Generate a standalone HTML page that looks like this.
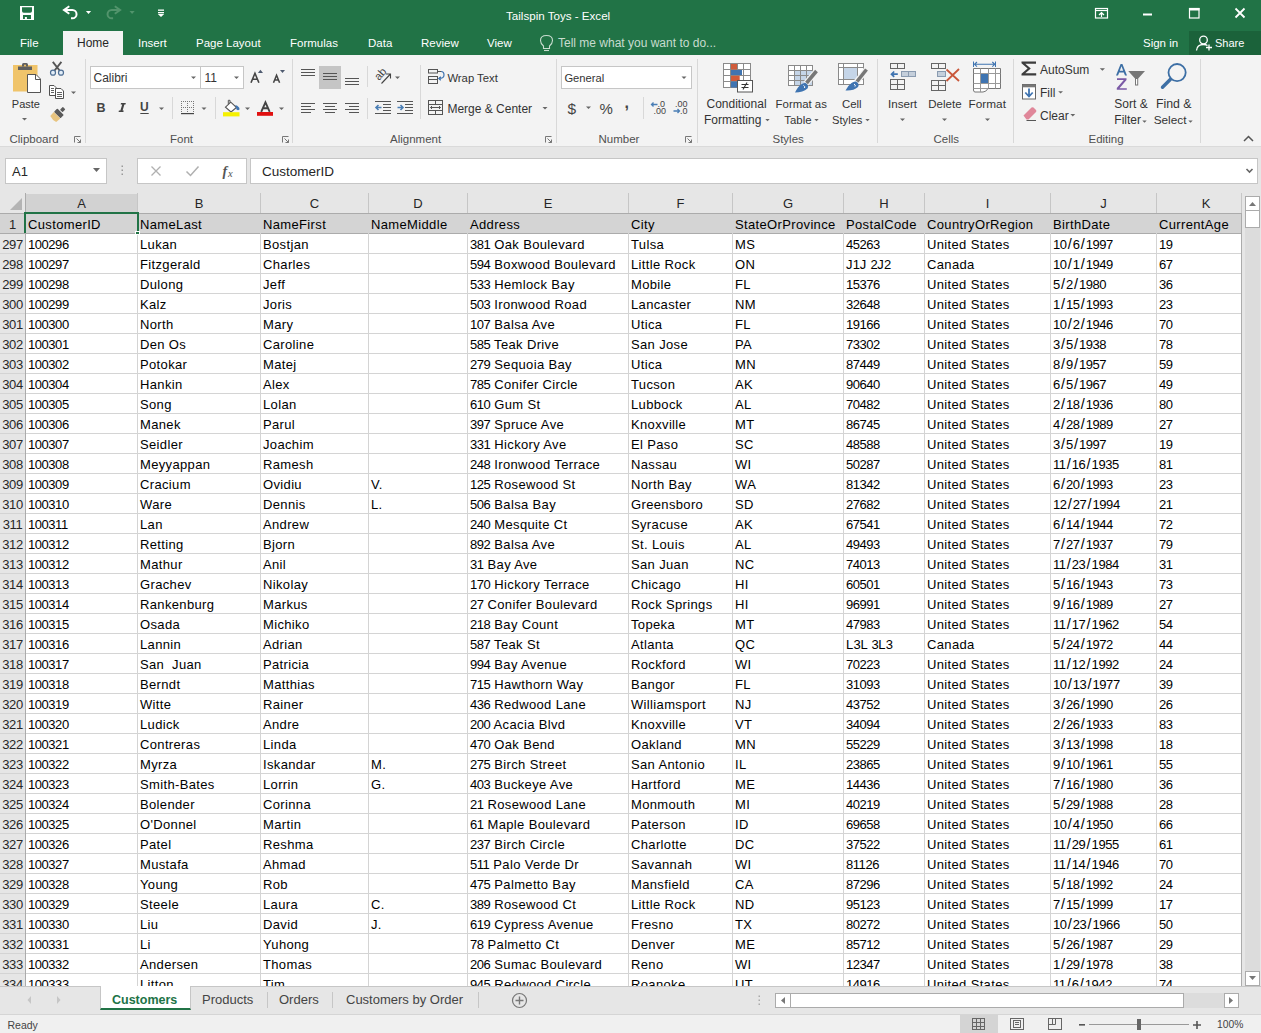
<!DOCTYPE html><html><head><meta charset="utf-8"><title>Tailspin Toys - Excel</title><style>
*{box-sizing:border-box;margin:0;padding:0}
html,body{width:1261px;height:1033px;overflow:hidden;background:#e6e6e6;font-family:"Liberation Sans",sans-serif;color:#000}
.a{position:absolute}
#title{left:0;top:0;width:1261px;height:55px;background:#217346;color:#fff}
#ribbon{left:0;top:55px;width:1261px;height:92px;background:#f3f3f3;border-bottom:1px solid #dadada}
.tab{position:absolute;top:31px;height:24px;font-size:11.5px;line-height:24px;color:#fff;white-space:nowrap}
.lbl{position:absolute;font-size:12px;color:#444;white-space:nowrap;line-height:14px}
.rt{position:absolute;font-size:12px;color:#262626;white-space:nowrap;line-height:14px}
.sep{position:absolute;width:1px;background:#d5d5d5}
.gsep{position:absolute;top:4px;width:1px;height:84px;background:#d5d5d5}
.box{position:absolute;background:#fff;border:1px solid #c6c6c6}
.dd{position:absolute;width:0;height:0;border-left:3px solid transparent;border-right:3px solid transparent;border-top:3px solid #666}
#grid{left:0;top:193px;width:1242px;height:793px;overflow:hidden;background:#fff}
.hl{position:absolute;left:0;height:1px;background:#d4d4d4}
.vl{position:absolute;top:0;width:1px;background:#d4d4d4}
.c{position:absolute;height:20px;font-size:13px;line-height:23px;white-space:nowrap;overflow:visible;padding-left:3px;letter-spacing:0.35px}
.d{letter-spacing:-0.45px}
.s{letter-spacing:0;padding:0 1.1px;font-size:14.5px}
.rh{position:absolute;left:0;width:25px;height:20px;font-size:13px;line-height:23px;text-align:center;color:#262626;letter-spacing:-0.4px}
.ch{position:absolute;top:0;height:20px;font-size:13px;line-height:21px;text-align:center;color:#262626}
</style></head><body>
<div id="title" class="a">
<div class="a" style="left:0;top:0;width:1261px;text-align:center;font-size:11.6px;line-height:31px;padding-left:0"><span class="a" style="left:506px;top:0;">Tailspin Toys - Excel</span></div>
<div class="tab" style="left:20px">File</div>
<div class="tab" style="left:138px">Insert</div>
<div class="tab" style="left:196px">Page Layout</div>
<div class="tab" style="left:290px">Formulas</div>
<div class="tab" style="left:368px">Data</div>
<div class="tab" style="left:421px">Review</div>
<div class="tab" style="left:487px">View</div>
<div class="a" style="left:63px;top:31px;width:60px;height:24px;background:#f3f3f3;color:#262626;font-size:12px;line-height:24px;text-align:center">Home</div>
<div class="tab" style="left:558px;color:#c8dccf;font-size:12px">Tell me what you want to do...</div>
<div class="tab" style="left:1143px">Sign in</div>
<div class="a" style="left:1189px;top:31px;width:72px;height:24px;background:#1b623a"></div>
<div class="tab" style="left:1215px;font-size:11px">Share</div>
</div>
<div id="ribbon" class="a"></div>
<div class="a" style="left:9.5px;top:131.5px;font-size:11.5px;line-height:14px;color:#505050;white-space:nowrap;">Clipboard</div>
<div class="a" style="left:170px;top:131.5px;font-size:11.5px;line-height:14px;color:#505050;white-space:nowrap;">Font</div>
<div class="a" style="left:390px;top:131.5px;font-size:11.5px;line-height:14px;color:#505050;white-space:nowrap;">Alignment</div>
<div class="a" style="left:598.5px;top:131.5px;font-size:11.5px;line-height:14px;color:#505050;white-space:nowrap;">Number</div>
<div class="a" style="left:772.5px;top:131.5px;font-size:11.5px;line-height:14px;color:#505050;white-space:nowrap;">Styles</div>
<div class="a" style="left:933.5px;top:131.5px;font-size:11.5px;line-height:14px;color:#505050;white-space:nowrap;">Cells</div>
<div class="a" style="left:1088.5px;top:131.5px;font-size:11.5px;line-height:14px;color:#505050;white-space:nowrap;">Editing</div>
<div class="a" style="left:11.8px;top:96.8px;font-size:11px;line-height:14px;color:#333;white-space:nowrap;">Paste</div>
<div class="box" style="left:90px;top:66px;width:111px;height:23px;border-color:#c6c6c6"></div>
<div class="box" style="left:200px;top:66px;width:44px;height:23px;border-color:#c6c6c6"></div>
<div class="a" style="left:93.5px;top:70.5px;font-size:12px;line-height:14px;color:#333;white-space:nowrap;">Calibri</div>
<div class="a" style="left:204.5px;top:70.5px;font-size:12px;line-height:14px;color:#333;white-space:nowrap;">11</div>
<div class="a" style="left:319px;top:66px;width:22px;height:23px;background:#c5c5c5"></div>
<div class="a" style="left:447.4px;top:71.4px;font-size:11.3px;line-height:14px;color:#333;white-space:nowrap;">Wrap Text</div>
<div class="a" style="left:447.4px;top:102.2px;font-size:12px;line-height:14px;color:#333;white-space:nowrap;">Merge &amp; Center</div>
<div class="box" style="left:561px;top:66px;width:131px;height:23px;border-color:#c6c6c6"></div>
<div class="a" style="left:564.4px;top:70.5px;font-size:11.2px;line-height:14px;color:#333;white-space:nowrap;">General</div>
<div class="a" style="left:567.5px;top:99.5px;font-size:15.5px;line-height:14px;color:#444;white-space:nowrap;line-height:18px">$</div>
<div class="a" style="left:599.5px;top:100px;font-size:15px;line-height:14px;color:#444;white-space:nowrap;line-height:18px">%</div>
<div class="a" style="left:624.5px;top:93.5px;font-size:16px;line-height:14px;color:#444;white-space:nowrap;line-height:18px;font-weight:bold">,</div>
<div class="a" style="left:706.5px;top:97.1px;font-size:12px;line-height:14px;color:#333;white-space:nowrap;">Conditional</div>
<div class="a" style="left:704px;top:113.4px;font-size:12px;line-height:14px;color:#333;white-space:nowrap;">Formatting</div>
<div class="a" style="left:775.6px;top:97.1px;font-size:11.4px;line-height:14px;color:#333;white-space:nowrap;">Format as</div>
<div class="a" style="left:784.3px;top:113.4px;font-size:11.4px;line-height:14px;color:#333;white-space:nowrap;">Table</div>
<div class="a" style="left:842px;top:97.1px;font-size:11.4px;line-height:14px;color:#333;white-space:nowrap;">Cell</div>
<div class="a" style="left:832px;top:113.4px;font-size:11.2px;line-height:14px;color:#333;white-space:nowrap;">Styles</div>
<div class="a" style="left:888px;top:97.3px;font-size:11.6px;line-height:14px;color:#333;white-space:nowrap;">Insert</div>
<div class="a" style="left:928.3px;top:97.3px;font-size:11.5px;line-height:14px;color:#333;white-space:nowrap;">Delete</div>
<div class="a" style="left:968.6px;top:97.3px;font-size:11.8px;line-height:14px;color:#333;white-space:nowrap;">Format</div>
<div class="a" style="left:1040px;top:63.2px;font-size:12px;line-height:14px;color:#333;white-space:nowrap;">AutoSum</div>
<div class="a" style="left:1040px;top:85.9px;font-size:12px;line-height:14px;color:#333;white-space:nowrap;">Fill</div>
<div class="a" style="left:1040px;top:108.5px;font-size:12px;line-height:14px;color:#333;white-space:nowrap;">Clear</div>
<div class="a" style="left:1114.3px;top:97px;font-size:12px;line-height:14px;color:#333;white-space:nowrap;">Sort &amp;</div>
<div class="a" style="left:1114.3px;top:112.8px;font-size:12px;line-height:14px;color:#333;white-space:nowrap;">Filter</div>
<div class="a" style="left:1156px;top:97px;font-size:12.3px;line-height:14px;color:#333;white-space:nowrap;">Find &amp;</div>
<div class="a" style="left:1153.7px;top:112.8px;font-size:11.8px;line-height:14px;color:#333;white-space:nowrap;">Select</div>
<div class="box" style="left:5px;top:158px;width:102px;height:26px"></div>
<div class="a" style="left:12px;top:158px;font-size:13px;line-height:28px;color:#262626">A1</div>
<div class="box" style="left:137px;top:158px;width:110px;height:26px"></div>
<div class="box" style="left:250px;top:158px;width:1008px;height:26px"></div>
<div class="a" style="left:262px;top:158px;font-size:13.5px;line-height:28px;color:#262626">CustomerID</div>
<div id="grid" class="a">
<div class="a" style="left:0;top:0;width:1241px;height:20px;background:#e6e6e6"></div>
<div class="a" style="left:25px;top:1px;width:112px;height:19px;background:#d2d2d2"></div>
<div class="a" style="left:0;top:20px;width:25px;height:773px;background:#e6e6e6"></div>
<div class="a" style="left:0;top:21px;width:25px;height:19px;background:#d4d4d4"></div>
<div class="a" style="left:26px;top:21px;width:1215px;height:19px;background:#d4d4d4"></div>
<div class="hl" style="top:20px;width:1241px;background:#ababab"></div>
<div class="hl" style="top:40px;width:1241px;background:#ababab"></div>
<div class="hl" style="top:60px;width:1241px;background:#d4d4d4"></div>
<div class="hl" style="top:80px;width:1241px;background:#d4d4d4"></div>
<div class="hl" style="top:100px;width:1241px;background:#d4d4d4"></div>
<div class="hl" style="top:120px;width:1241px;background:#d4d4d4"></div>
<div class="hl" style="top:140px;width:1241px;background:#d4d4d4"></div>
<div class="hl" style="top:160px;width:1241px;background:#d4d4d4"></div>
<div class="hl" style="top:180px;width:1241px;background:#d4d4d4"></div>
<div class="hl" style="top:200px;width:1241px;background:#d4d4d4"></div>
<div class="hl" style="top:220px;width:1241px;background:#d4d4d4"></div>
<div class="hl" style="top:240px;width:1241px;background:#d4d4d4"></div>
<div class="hl" style="top:260px;width:1241px;background:#d4d4d4"></div>
<div class="hl" style="top:280px;width:1241px;background:#d4d4d4"></div>
<div class="hl" style="top:300px;width:1241px;background:#d4d4d4"></div>
<div class="hl" style="top:320px;width:1241px;background:#d4d4d4"></div>
<div class="hl" style="top:340px;width:1241px;background:#d4d4d4"></div>
<div class="hl" style="top:360px;width:1241px;background:#d4d4d4"></div>
<div class="hl" style="top:380px;width:1241px;background:#d4d4d4"></div>
<div class="hl" style="top:400px;width:1241px;background:#d4d4d4"></div>
<div class="hl" style="top:420px;width:1241px;background:#d4d4d4"></div>
<div class="hl" style="top:440px;width:1241px;background:#d4d4d4"></div>
<div class="hl" style="top:460px;width:1241px;background:#d4d4d4"></div>
<div class="hl" style="top:480px;width:1241px;background:#d4d4d4"></div>
<div class="hl" style="top:500px;width:1241px;background:#d4d4d4"></div>
<div class="hl" style="top:520px;width:1241px;background:#d4d4d4"></div>
<div class="hl" style="top:540px;width:1241px;background:#d4d4d4"></div>
<div class="hl" style="top:560px;width:1241px;background:#d4d4d4"></div>
<div class="hl" style="top:580px;width:1241px;background:#d4d4d4"></div>
<div class="hl" style="top:600px;width:1241px;background:#d4d4d4"></div>
<div class="hl" style="top:620px;width:1241px;background:#d4d4d4"></div>
<div class="hl" style="top:640px;width:1241px;background:#d4d4d4"></div>
<div class="hl" style="top:660px;width:1241px;background:#d4d4d4"></div>
<div class="hl" style="top:680px;width:1241px;background:#d4d4d4"></div>
<div class="hl" style="top:700px;width:1241px;background:#d4d4d4"></div>
<div class="hl" style="top:720px;width:1241px;background:#d4d4d4"></div>
<div class="hl" style="top:740px;width:1241px;background:#d4d4d4"></div>
<div class="hl" style="top:760px;width:1241px;background:#d4d4d4"></div>
<div class="hl" style="top:780px;width:1241px;background:#d4d4d4"></div>
<div class="hl" style="top:800px;width:1241px;background:#d4d4d4"></div>
<div class="vl" style="left:25px;height:793px;background:#ababab"></div>
<div class="vl" style="left:137px;top:0;height:20px;background:#c6c6c6"></div>
<div class="vl" style="left:137px;top:40px;height:753px"></div>
<div class="vl" style="left:260px;top:0;height:20px;background:#c6c6c6"></div>
<div class="vl" style="left:260px;top:40px;height:753px"></div>
<div class="vl" style="left:368px;top:0;height:20px;background:#c6c6c6"></div>
<div class="vl" style="left:368px;top:40px;height:753px"></div>
<div class="vl" style="left:467px;top:0;height:20px;background:#c6c6c6"></div>
<div class="vl" style="left:467px;top:40px;height:753px"></div>
<div class="vl" style="left:628px;top:0;height:20px;background:#c6c6c6"></div>
<div class="vl" style="left:628px;top:40px;height:753px"></div>
<div class="vl" style="left:732px;top:0;height:20px;background:#c6c6c6"></div>
<div class="vl" style="left:732px;top:40px;height:753px"></div>
<div class="vl" style="left:843px;top:0;height:20px;background:#c6c6c6"></div>
<div class="vl" style="left:843px;top:40px;height:753px"></div>
<div class="vl" style="left:924px;top:0;height:20px;background:#c6c6c6"></div>
<div class="vl" style="left:924px;top:40px;height:753px"></div>
<div class="vl" style="left:1050px;top:0;height:20px;background:#c6c6c6"></div>
<div class="vl" style="left:1050px;top:40px;height:753px"></div>
<div class="vl" style="left:1156px;top:0;height:20px;background:#c6c6c6"></div>
<div class="vl" style="left:1156px;top:40px;height:753px"></div>
<div class="vl" style="left:1241px;top:0;height:20px;background:#c6c6c6"></div>
<div class="vl" style="left:1241px;top:40px;height:753px"></div>
<div class="ch" style="left:26px;width:111px">A</div>
<div class="ch" style="left:138px;width:122px">B</div>
<div class="ch" style="left:261px;width:107px">C</div>
<div class="ch" style="left:369px;width:98px">D</div>
<div class="ch" style="left:468px;width:160px">E</div>
<div class="ch" style="left:629px;width:103px">F</div>
<div class="ch" style="left:733px;width:110px">G</div>
<div class="ch" style="left:844px;width:80px">H</div>
<div class="ch" style="left:925px;width:125px">I</div>
<div class="ch" style="left:1051px;width:105px">J</div>
<div class="ch" style="left:1157px;width:98px">K</div>
<div class="rh" style="top:20px">1</div>
<div class="c" style="left:25px;top:20px">CustomerID</div>
<div class="c" style="left:137px;top:20px">NameLast</div>
<div class="c" style="left:260px;top:20px">NameFirst</div>
<div class="c" style="left:368px;top:20px">NameMiddle</div>
<div class="c" style="left:467px;top:20px">Address</div>
<div class="c" style="left:628px;top:20px">City</div>
<div class="c" style="left:732px;top:20px">StateOrProvince</div>
<div class="c" style="left:843px;top:20px">PostalCode</div>
<div class="c" style="left:924px;top:20px">CountryOrRegion</div>
<div class="c" style="left:1050px;top:20px">BirthDate</div>
<div class="c" style="left:1156px;top:20px">CurrentAge</div>
<div class="rh" style="top:40px">297</div>
<div class="c" style="left:25px;top:40px"><span class="d">100296</span></div>
<div class="c" style="left:137px;top:40px">Lukan</div>
<div class="c" style="left:260px;top:40px">Bostjan</div>
<div class="c" style="left:467px;top:40px"><span class="d">381</span> Oak Boulevard</div>
<div class="c" style="left:628px;top:40px">Tulsa</div>
<div class="c" style="left:732px;top:40px">MS</div>
<div class="c" style="left:843px;top:40px"><span class="d">45263</span></div>
<div class="c" style="left:924px;top:40px">United States</div>
<div class="c" style="left:1050px;top:40px"><span class="d">10</span><span class="s">/</span><span class="d">6</span><span class="s">/</span><span class="d">1997</span></div>
<div class="c" style="left:1156px;top:40px"><span class="d">19</span></div>
<div class="rh" style="top:60px">298</div>
<div class="c" style="left:25px;top:60px"><span class="d">100297</span></div>
<div class="c" style="left:137px;top:60px">Fitzgerald</div>
<div class="c" style="left:260px;top:60px">Charles</div>
<div class="c" style="left:467px;top:60px"><span class="d">594</span> Boxwood Boulevard</div>
<div class="c" style="left:628px;top:60px">Little Rock</div>
<div class="c" style="left:732px;top:60px">ON</div>
<div class="c" style="left:843px;top:60px">J<span class="d">1</span>J <span class="d">2</span>J<span class="d">2</span></div>
<div class="c" style="left:924px;top:60px">Canada</div>
<div class="c" style="left:1050px;top:60px"><span class="d">10</span><span class="s">/</span><span class="d">1</span><span class="s">/</span><span class="d">1949</span></div>
<div class="c" style="left:1156px;top:60px"><span class="d">67</span></div>
<div class="rh" style="top:80px">299</div>
<div class="c" style="left:25px;top:80px"><span class="d">100298</span></div>
<div class="c" style="left:137px;top:80px">Dulong</div>
<div class="c" style="left:260px;top:80px">Jeff</div>
<div class="c" style="left:467px;top:80px"><span class="d">533</span> Hemlock Bay</div>
<div class="c" style="left:628px;top:80px">Mobile</div>
<div class="c" style="left:732px;top:80px">FL</div>
<div class="c" style="left:843px;top:80px"><span class="d">15376</span></div>
<div class="c" style="left:924px;top:80px">United States</div>
<div class="c" style="left:1050px;top:80px"><span class="d">5</span><span class="s">/</span><span class="d">2</span><span class="s">/</span><span class="d">1980</span></div>
<div class="c" style="left:1156px;top:80px"><span class="d">36</span></div>
<div class="rh" style="top:100px">300</div>
<div class="c" style="left:25px;top:100px"><span class="d">100299</span></div>
<div class="c" style="left:137px;top:100px">Kalz</div>
<div class="c" style="left:260px;top:100px">Joris</div>
<div class="c" style="left:467px;top:100px"><span class="d">503</span> Ironwood Road</div>
<div class="c" style="left:628px;top:100px">Lancaster</div>
<div class="c" style="left:732px;top:100px">NM</div>
<div class="c" style="left:843px;top:100px"><span class="d">32648</span></div>
<div class="c" style="left:924px;top:100px">United States</div>
<div class="c" style="left:1050px;top:100px"><span class="d">1</span><span class="s">/</span><span class="d">15</span><span class="s">/</span><span class="d">1993</span></div>
<div class="c" style="left:1156px;top:100px"><span class="d">23</span></div>
<div class="rh" style="top:120px">301</div>
<div class="c" style="left:25px;top:120px"><span class="d">100300</span></div>
<div class="c" style="left:137px;top:120px">North</div>
<div class="c" style="left:260px;top:120px">Mary</div>
<div class="c" style="left:467px;top:120px"><span class="d">107</span> Balsa Ave</div>
<div class="c" style="left:628px;top:120px">Utica</div>
<div class="c" style="left:732px;top:120px">FL</div>
<div class="c" style="left:843px;top:120px"><span class="d">19166</span></div>
<div class="c" style="left:924px;top:120px">United States</div>
<div class="c" style="left:1050px;top:120px"><span class="d">10</span><span class="s">/</span><span class="d">2</span><span class="s">/</span><span class="d">1946</span></div>
<div class="c" style="left:1156px;top:120px"><span class="d">70</span></div>
<div class="rh" style="top:140px">302</div>
<div class="c" style="left:25px;top:140px"><span class="d">100301</span></div>
<div class="c" style="left:137px;top:140px">Den Os</div>
<div class="c" style="left:260px;top:140px">Caroline</div>
<div class="c" style="left:467px;top:140px"><span class="d">585</span> Teak Drive</div>
<div class="c" style="left:628px;top:140px">San Jose</div>
<div class="c" style="left:732px;top:140px">PA</div>
<div class="c" style="left:843px;top:140px"><span class="d">73302</span></div>
<div class="c" style="left:924px;top:140px">United States</div>
<div class="c" style="left:1050px;top:140px"><span class="d">3</span><span class="s">/</span><span class="d">5</span><span class="s">/</span><span class="d">1938</span></div>
<div class="c" style="left:1156px;top:140px"><span class="d">78</span></div>
<div class="rh" style="top:160px">303</div>
<div class="c" style="left:25px;top:160px"><span class="d">100302</span></div>
<div class="c" style="left:137px;top:160px">Potokar</div>
<div class="c" style="left:260px;top:160px">Matej</div>
<div class="c" style="left:467px;top:160px"><span class="d">279</span> Sequoia Bay</div>
<div class="c" style="left:628px;top:160px">Utica</div>
<div class="c" style="left:732px;top:160px">MN</div>
<div class="c" style="left:843px;top:160px"><span class="d">87449</span></div>
<div class="c" style="left:924px;top:160px">United States</div>
<div class="c" style="left:1050px;top:160px"><span class="d">8</span><span class="s">/</span><span class="d">9</span><span class="s">/</span><span class="d">1957</span></div>
<div class="c" style="left:1156px;top:160px"><span class="d">59</span></div>
<div class="rh" style="top:180px">304</div>
<div class="c" style="left:25px;top:180px"><span class="d">100304</span></div>
<div class="c" style="left:137px;top:180px">Hankin</div>
<div class="c" style="left:260px;top:180px">Alex</div>
<div class="c" style="left:467px;top:180px"><span class="d">785</span> Conifer Circle</div>
<div class="c" style="left:628px;top:180px">Tucson</div>
<div class="c" style="left:732px;top:180px">AK</div>
<div class="c" style="left:843px;top:180px"><span class="d">90640</span></div>
<div class="c" style="left:924px;top:180px">United States</div>
<div class="c" style="left:1050px;top:180px"><span class="d">6</span><span class="s">/</span><span class="d">5</span><span class="s">/</span><span class="d">1967</span></div>
<div class="c" style="left:1156px;top:180px"><span class="d">49</span></div>
<div class="rh" style="top:200px">305</div>
<div class="c" style="left:25px;top:200px"><span class="d">100305</span></div>
<div class="c" style="left:137px;top:200px">Song</div>
<div class="c" style="left:260px;top:200px">Lolan</div>
<div class="c" style="left:467px;top:200px"><span class="d">610</span> Gum St</div>
<div class="c" style="left:628px;top:200px">Lubbock</div>
<div class="c" style="left:732px;top:200px">AL</div>
<div class="c" style="left:843px;top:200px"><span class="d">70482</span></div>
<div class="c" style="left:924px;top:200px">United States</div>
<div class="c" style="left:1050px;top:200px"><span class="d">2</span><span class="s">/</span><span class="d">18</span><span class="s">/</span><span class="d">1936</span></div>
<div class="c" style="left:1156px;top:200px"><span class="d">80</span></div>
<div class="rh" style="top:220px">306</div>
<div class="c" style="left:25px;top:220px"><span class="d">100306</span></div>
<div class="c" style="left:137px;top:220px">Manek</div>
<div class="c" style="left:260px;top:220px">Parul</div>
<div class="c" style="left:467px;top:220px"><span class="d">397</span> Spruce Ave</div>
<div class="c" style="left:628px;top:220px">Knoxville</div>
<div class="c" style="left:732px;top:220px">MT</div>
<div class="c" style="left:843px;top:220px"><span class="d">86745</span></div>
<div class="c" style="left:924px;top:220px">United States</div>
<div class="c" style="left:1050px;top:220px"><span class="d">4</span><span class="s">/</span><span class="d">28</span><span class="s">/</span><span class="d">1989</span></div>
<div class="c" style="left:1156px;top:220px"><span class="d">27</span></div>
<div class="rh" style="top:240px">307</div>
<div class="c" style="left:25px;top:240px"><span class="d">100307</span></div>
<div class="c" style="left:137px;top:240px">Seidler</div>
<div class="c" style="left:260px;top:240px">Joachim</div>
<div class="c" style="left:467px;top:240px"><span class="d">331</span> Hickory Ave</div>
<div class="c" style="left:628px;top:240px">El Paso</div>
<div class="c" style="left:732px;top:240px">SC</div>
<div class="c" style="left:843px;top:240px"><span class="d">48588</span></div>
<div class="c" style="left:924px;top:240px">United States</div>
<div class="c" style="left:1050px;top:240px"><span class="d">3</span><span class="s">/</span><span class="d">5</span><span class="s">/</span><span class="d">1997</span></div>
<div class="c" style="left:1156px;top:240px"><span class="d">19</span></div>
<div class="rh" style="top:260px">308</div>
<div class="c" style="left:25px;top:260px"><span class="d">100308</span></div>
<div class="c" style="left:137px;top:260px">Meyyappan</div>
<div class="c" style="left:260px;top:260px">Ramesh</div>
<div class="c" style="left:467px;top:260px"><span class="d">248</span> Ironwood Terrace</div>
<div class="c" style="left:628px;top:260px">Nassau</div>
<div class="c" style="left:732px;top:260px">WI</div>
<div class="c" style="left:843px;top:260px"><span class="d">50287</span></div>
<div class="c" style="left:924px;top:260px">United States</div>
<div class="c" style="left:1050px;top:260px"><span class="d">11</span><span class="s">/</span><span class="d">16</span><span class="s">/</span><span class="d">1935</span></div>
<div class="c" style="left:1156px;top:260px"><span class="d">81</span></div>
<div class="rh" style="top:280px">309</div>
<div class="c" style="left:25px;top:280px"><span class="d">100309</span></div>
<div class="c" style="left:137px;top:280px">Cracium</div>
<div class="c" style="left:260px;top:280px">Ovidiu</div>
<div class="c" style="left:368px;top:280px">V.</div>
<div class="c" style="left:467px;top:280px"><span class="d">125</span> Rosewood St</div>
<div class="c" style="left:628px;top:280px">North Bay</div>
<div class="c" style="left:732px;top:280px">WA</div>
<div class="c" style="left:843px;top:280px"><span class="d">81342</span></div>
<div class="c" style="left:924px;top:280px">United States</div>
<div class="c" style="left:1050px;top:280px"><span class="d">6</span><span class="s">/</span><span class="d">20</span><span class="s">/</span><span class="d">1993</span></div>
<div class="c" style="left:1156px;top:280px"><span class="d">23</span></div>
<div class="rh" style="top:300px">310</div>
<div class="c" style="left:25px;top:300px"><span class="d">100310</span></div>
<div class="c" style="left:137px;top:300px">Ware</div>
<div class="c" style="left:260px;top:300px">Dennis</div>
<div class="c" style="left:368px;top:300px">L.</div>
<div class="c" style="left:467px;top:300px"><span class="d">506</span> Balsa Bay</div>
<div class="c" style="left:628px;top:300px">Greensboro</div>
<div class="c" style="left:732px;top:300px">SD</div>
<div class="c" style="left:843px;top:300px"><span class="d">27682</span></div>
<div class="c" style="left:924px;top:300px">United States</div>
<div class="c" style="left:1050px;top:300px"><span class="d">12</span><span class="s">/</span><span class="d">27</span><span class="s">/</span><span class="d">1994</span></div>
<div class="c" style="left:1156px;top:300px"><span class="d">21</span></div>
<div class="rh" style="top:320px">311</div>
<div class="c" style="left:25px;top:320px"><span class="d">100311</span></div>
<div class="c" style="left:137px;top:320px">Lan</div>
<div class="c" style="left:260px;top:320px">Andrew</div>
<div class="c" style="left:467px;top:320px"><span class="d">240</span> Mesquite Ct</div>
<div class="c" style="left:628px;top:320px">Syracuse</div>
<div class="c" style="left:732px;top:320px">AK</div>
<div class="c" style="left:843px;top:320px"><span class="d">67541</span></div>
<div class="c" style="left:924px;top:320px">United States</div>
<div class="c" style="left:1050px;top:320px"><span class="d">6</span><span class="s">/</span><span class="d">14</span><span class="s">/</span><span class="d">1944</span></div>
<div class="c" style="left:1156px;top:320px"><span class="d">72</span></div>
<div class="rh" style="top:340px">312</div>
<div class="c" style="left:25px;top:340px"><span class="d">100312</span></div>
<div class="c" style="left:137px;top:340px">Retting</div>
<div class="c" style="left:260px;top:340px">Bjorn</div>
<div class="c" style="left:467px;top:340px"><span class="d">892</span> Balsa Ave</div>
<div class="c" style="left:628px;top:340px">St. Louis</div>
<div class="c" style="left:732px;top:340px">AL</div>
<div class="c" style="left:843px;top:340px"><span class="d">49493</span></div>
<div class="c" style="left:924px;top:340px">United States</div>
<div class="c" style="left:1050px;top:340px"><span class="d">7</span><span class="s">/</span><span class="d">27</span><span class="s">/</span><span class="d">1937</span></div>
<div class="c" style="left:1156px;top:340px"><span class="d">79</span></div>
<div class="rh" style="top:360px">313</div>
<div class="c" style="left:25px;top:360px"><span class="d">100312</span></div>
<div class="c" style="left:137px;top:360px">Mathur</div>
<div class="c" style="left:260px;top:360px">Anil</div>
<div class="c" style="left:467px;top:360px"><span class="d">31</span> Bay Ave</div>
<div class="c" style="left:628px;top:360px">San Juan</div>
<div class="c" style="left:732px;top:360px">NC</div>
<div class="c" style="left:843px;top:360px"><span class="d">74013</span></div>
<div class="c" style="left:924px;top:360px">United States</div>
<div class="c" style="left:1050px;top:360px"><span class="d">11</span><span class="s">/</span><span class="d">23</span><span class="s">/</span><span class="d">1984</span></div>
<div class="c" style="left:1156px;top:360px"><span class="d">31</span></div>
<div class="rh" style="top:380px">314</div>
<div class="c" style="left:25px;top:380px"><span class="d">100313</span></div>
<div class="c" style="left:137px;top:380px">Grachev</div>
<div class="c" style="left:260px;top:380px">Nikolay</div>
<div class="c" style="left:467px;top:380px"><span class="d">170</span> Hickory Terrace</div>
<div class="c" style="left:628px;top:380px">Chicago</div>
<div class="c" style="left:732px;top:380px">HI</div>
<div class="c" style="left:843px;top:380px"><span class="d">60501</span></div>
<div class="c" style="left:924px;top:380px">United States</div>
<div class="c" style="left:1050px;top:380px"><span class="d">5</span><span class="s">/</span><span class="d">16</span><span class="s">/</span><span class="d">1943</span></div>
<div class="c" style="left:1156px;top:380px"><span class="d">73</span></div>
<div class="rh" style="top:400px">315</div>
<div class="c" style="left:25px;top:400px"><span class="d">100314</span></div>
<div class="c" style="left:137px;top:400px">Rankenburg</div>
<div class="c" style="left:260px;top:400px">Markus</div>
<div class="c" style="left:467px;top:400px"><span class="d">27</span> Conifer Boulevard</div>
<div class="c" style="left:628px;top:400px">Rock Springs</div>
<div class="c" style="left:732px;top:400px">HI</div>
<div class="c" style="left:843px;top:400px"><span class="d">96991</span></div>
<div class="c" style="left:924px;top:400px">United States</div>
<div class="c" style="left:1050px;top:400px"><span class="d">9</span><span class="s">/</span><span class="d">16</span><span class="s">/</span><span class="d">1989</span></div>
<div class="c" style="left:1156px;top:400px"><span class="d">27</span></div>
<div class="rh" style="top:420px">316</div>
<div class="c" style="left:25px;top:420px"><span class="d">100315</span></div>
<div class="c" style="left:137px;top:420px">Osada</div>
<div class="c" style="left:260px;top:420px">Michiko</div>
<div class="c" style="left:467px;top:420px"><span class="d">218</span> Bay Count</div>
<div class="c" style="left:628px;top:420px">Topeka</div>
<div class="c" style="left:732px;top:420px">MT</div>
<div class="c" style="left:843px;top:420px"><span class="d">47983</span></div>
<div class="c" style="left:924px;top:420px">United States</div>
<div class="c" style="left:1050px;top:420px"><span class="d">11</span><span class="s">/</span><span class="d">17</span><span class="s">/</span><span class="d">1962</span></div>
<div class="c" style="left:1156px;top:420px"><span class="d">54</span></div>
<div class="rh" style="top:440px">317</div>
<div class="c" style="left:25px;top:440px"><span class="d">100316</span></div>
<div class="c" style="left:137px;top:440px">Lannin</div>
<div class="c" style="left:260px;top:440px">Adrian</div>
<div class="c" style="left:467px;top:440px"><span class="d">587</span> Teak St</div>
<div class="c" style="left:628px;top:440px">Atlanta</div>
<div class="c" style="left:732px;top:440px">QC</div>
<div class="c" style="left:843px;top:440px">L<span class="d">3</span>L <span class="d">3</span>L<span class="d">3</span></div>
<div class="c" style="left:924px;top:440px">Canada</div>
<div class="c" style="left:1050px;top:440px"><span class="d">5</span><span class="s">/</span><span class="d">24</span><span class="s">/</span><span class="d">1972</span></div>
<div class="c" style="left:1156px;top:440px"><span class="d">44</span></div>
<div class="rh" style="top:460px">318</div>
<div class="c" style="left:25px;top:460px"><span class="d">100317</span></div>
<div class="c" style="left:137px;top:460px">San &nbsp;Juan</div>
<div class="c" style="left:260px;top:460px">Patricia</div>
<div class="c" style="left:467px;top:460px"><span class="d">994</span> Bay Avenue</div>
<div class="c" style="left:628px;top:460px">Rockford</div>
<div class="c" style="left:732px;top:460px">WI</div>
<div class="c" style="left:843px;top:460px"><span class="d">70223</span></div>
<div class="c" style="left:924px;top:460px">United States</div>
<div class="c" style="left:1050px;top:460px"><span class="d">11</span><span class="s">/</span><span class="d">12</span><span class="s">/</span><span class="d">1992</span></div>
<div class="c" style="left:1156px;top:460px"><span class="d">24</span></div>
<div class="rh" style="top:480px">319</div>
<div class="c" style="left:25px;top:480px"><span class="d">100318</span></div>
<div class="c" style="left:137px;top:480px">Berndt</div>
<div class="c" style="left:260px;top:480px">Matthias</div>
<div class="c" style="left:467px;top:480px"><span class="d">715</span> Hawthorn Way</div>
<div class="c" style="left:628px;top:480px">Bangor</div>
<div class="c" style="left:732px;top:480px">FL</div>
<div class="c" style="left:843px;top:480px"><span class="d">31093</span></div>
<div class="c" style="left:924px;top:480px">United States</div>
<div class="c" style="left:1050px;top:480px"><span class="d">10</span><span class="s">/</span><span class="d">13</span><span class="s">/</span><span class="d">1977</span></div>
<div class="c" style="left:1156px;top:480px"><span class="d">39</span></div>
<div class="rh" style="top:500px">320</div>
<div class="c" style="left:25px;top:500px"><span class="d">100319</span></div>
<div class="c" style="left:137px;top:500px">Witte</div>
<div class="c" style="left:260px;top:500px">Rainer</div>
<div class="c" style="left:467px;top:500px"><span class="d">436</span> Redwood Lane</div>
<div class="c" style="left:628px;top:500px">Williamsport</div>
<div class="c" style="left:732px;top:500px">NJ</div>
<div class="c" style="left:843px;top:500px"><span class="d">43752</span></div>
<div class="c" style="left:924px;top:500px">United States</div>
<div class="c" style="left:1050px;top:500px"><span class="d">3</span><span class="s">/</span><span class="d">26</span><span class="s">/</span><span class="d">1990</span></div>
<div class="c" style="left:1156px;top:500px"><span class="d">26</span></div>
<div class="rh" style="top:520px">321</div>
<div class="c" style="left:25px;top:520px"><span class="d">100320</span></div>
<div class="c" style="left:137px;top:520px">Ludick</div>
<div class="c" style="left:260px;top:520px">Andre</div>
<div class="c" style="left:467px;top:520px"><span class="d">200</span> Acacia Blvd</div>
<div class="c" style="left:628px;top:520px">Knoxville</div>
<div class="c" style="left:732px;top:520px">VT</div>
<div class="c" style="left:843px;top:520px"><span class="d">34094</span></div>
<div class="c" style="left:924px;top:520px">United States</div>
<div class="c" style="left:1050px;top:520px"><span class="d">2</span><span class="s">/</span><span class="d">26</span><span class="s">/</span><span class="d">1933</span></div>
<div class="c" style="left:1156px;top:520px"><span class="d">83</span></div>
<div class="rh" style="top:540px">322</div>
<div class="c" style="left:25px;top:540px"><span class="d">100321</span></div>
<div class="c" style="left:137px;top:540px">Contreras</div>
<div class="c" style="left:260px;top:540px">Linda</div>
<div class="c" style="left:467px;top:540px"><span class="d">470</span> Oak Bend</div>
<div class="c" style="left:628px;top:540px">Oakland</div>
<div class="c" style="left:732px;top:540px">MN</div>
<div class="c" style="left:843px;top:540px"><span class="d">55229</span></div>
<div class="c" style="left:924px;top:540px">United States</div>
<div class="c" style="left:1050px;top:540px"><span class="d">3</span><span class="s">/</span><span class="d">13</span><span class="s">/</span><span class="d">1998</span></div>
<div class="c" style="left:1156px;top:540px"><span class="d">18</span></div>
<div class="rh" style="top:560px">323</div>
<div class="c" style="left:25px;top:560px"><span class="d">100322</span></div>
<div class="c" style="left:137px;top:560px">Myrza</div>
<div class="c" style="left:260px;top:560px">Iskandar</div>
<div class="c" style="left:368px;top:560px">M.</div>
<div class="c" style="left:467px;top:560px"><span class="d">275</span> Birch Street</div>
<div class="c" style="left:628px;top:560px">San Antonio</div>
<div class="c" style="left:732px;top:560px">IL</div>
<div class="c" style="left:843px;top:560px"><span class="d">23865</span></div>
<div class="c" style="left:924px;top:560px">United States</div>
<div class="c" style="left:1050px;top:560px"><span class="d">9</span><span class="s">/</span><span class="d">10</span><span class="s">/</span><span class="d">1961</span></div>
<div class="c" style="left:1156px;top:560px"><span class="d">55</span></div>
<div class="rh" style="top:580px">324</div>
<div class="c" style="left:25px;top:580px"><span class="d">100323</span></div>
<div class="c" style="left:137px;top:580px">Smith-Bates</div>
<div class="c" style="left:260px;top:580px">Lorrin</div>
<div class="c" style="left:368px;top:580px">G.</div>
<div class="c" style="left:467px;top:580px"><span class="d">403</span> Buckeye Ave</div>
<div class="c" style="left:628px;top:580px">Hartford</div>
<div class="c" style="left:732px;top:580px">ME</div>
<div class="c" style="left:843px;top:580px"><span class="d">14436</span></div>
<div class="c" style="left:924px;top:580px">United States</div>
<div class="c" style="left:1050px;top:580px"><span class="d">7</span><span class="s">/</span><span class="d">16</span><span class="s">/</span><span class="d">1980</span></div>
<div class="c" style="left:1156px;top:580px"><span class="d">36</span></div>
<div class="rh" style="top:600px">325</div>
<div class="c" style="left:25px;top:600px"><span class="d">100324</span></div>
<div class="c" style="left:137px;top:600px">Bolender</div>
<div class="c" style="left:260px;top:600px">Corinna</div>
<div class="c" style="left:467px;top:600px"><span class="d">21</span> Rosewood Lane</div>
<div class="c" style="left:628px;top:600px">Monmouth</div>
<div class="c" style="left:732px;top:600px">MI</div>
<div class="c" style="left:843px;top:600px"><span class="d">40219</span></div>
<div class="c" style="left:924px;top:600px">United States</div>
<div class="c" style="left:1050px;top:600px"><span class="d">5</span><span class="s">/</span><span class="d">29</span><span class="s">/</span><span class="d">1988</span></div>
<div class="c" style="left:1156px;top:600px"><span class="d">28</span></div>
<div class="rh" style="top:620px">326</div>
<div class="c" style="left:25px;top:620px"><span class="d">100325</span></div>
<div class="c" style="left:137px;top:620px">O'Donnel</div>
<div class="c" style="left:260px;top:620px">Martin</div>
<div class="c" style="left:467px;top:620px"><span class="d">61</span> Maple Boulevard</div>
<div class="c" style="left:628px;top:620px">Paterson</div>
<div class="c" style="left:732px;top:620px">ID</div>
<div class="c" style="left:843px;top:620px"><span class="d">69658</span></div>
<div class="c" style="left:924px;top:620px">United States</div>
<div class="c" style="left:1050px;top:620px"><span class="d">10</span><span class="s">/</span><span class="d">4</span><span class="s">/</span><span class="d">1950</span></div>
<div class="c" style="left:1156px;top:620px"><span class="d">66</span></div>
<div class="rh" style="top:640px">327</div>
<div class="c" style="left:25px;top:640px"><span class="d">100326</span></div>
<div class="c" style="left:137px;top:640px">Patel</div>
<div class="c" style="left:260px;top:640px">Reshma</div>
<div class="c" style="left:467px;top:640px"><span class="d">237</span> Birch Circle</div>
<div class="c" style="left:628px;top:640px">Charlotte</div>
<div class="c" style="left:732px;top:640px">DC</div>
<div class="c" style="left:843px;top:640px"><span class="d">37522</span></div>
<div class="c" style="left:924px;top:640px">United States</div>
<div class="c" style="left:1050px;top:640px"><span class="d">11</span><span class="s">/</span><span class="d">29</span><span class="s">/</span><span class="d">1955</span></div>
<div class="c" style="left:1156px;top:640px"><span class="d">61</span></div>
<div class="rh" style="top:660px">328</div>
<div class="c" style="left:25px;top:660px"><span class="d">100327</span></div>
<div class="c" style="left:137px;top:660px">Mustafa</div>
<div class="c" style="left:260px;top:660px">Ahmad</div>
<div class="c" style="left:467px;top:660px"><span class="d">511</span> Palo Verde Dr</div>
<div class="c" style="left:628px;top:660px">Savannah</div>
<div class="c" style="left:732px;top:660px">WI</div>
<div class="c" style="left:843px;top:660px"><span class="d">81126</span></div>
<div class="c" style="left:924px;top:660px">United States</div>
<div class="c" style="left:1050px;top:660px"><span class="d">11</span><span class="s">/</span><span class="d">14</span><span class="s">/</span><span class="d">1946</span></div>
<div class="c" style="left:1156px;top:660px"><span class="d">70</span></div>
<div class="rh" style="top:680px">329</div>
<div class="c" style="left:25px;top:680px"><span class="d">100328</span></div>
<div class="c" style="left:137px;top:680px">Young</div>
<div class="c" style="left:260px;top:680px">Rob</div>
<div class="c" style="left:467px;top:680px"><span class="d">475</span> Palmetto Bay</div>
<div class="c" style="left:628px;top:680px">Mansfield</div>
<div class="c" style="left:732px;top:680px">CA</div>
<div class="c" style="left:843px;top:680px"><span class="d">87296</span></div>
<div class="c" style="left:924px;top:680px">United States</div>
<div class="c" style="left:1050px;top:680px"><span class="d">5</span><span class="s">/</span><span class="d">18</span><span class="s">/</span><span class="d">1992</span></div>
<div class="c" style="left:1156px;top:680px"><span class="d">24</span></div>
<div class="rh" style="top:700px">330</div>
<div class="c" style="left:25px;top:700px"><span class="d">100329</span></div>
<div class="c" style="left:137px;top:700px">Steele</div>
<div class="c" style="left:260px;top:700px">Laura</div>
<div class="c" style="left:368px;top:700px">C.</div>
<div class="c" style="left:467px;top:700px"><span class="d">389</span> Rosewood Ct</div>
<div class="c" style="left:628px;top:700px">Little Rock</div>
<div class="c" style="left:732px;top:700px">ND</div>
<div class="c" style="left:843px;top:700px"><span class="d">95123</span></div>
<div class="c" style="left:924px;top:700px">United States</div>
<div class="c" style="left:1050px;top:700px"><span class="d">7</span><span class="s">/</span><span class="d">15</span><span class="s">/</span><span class="d">1999</span></div>
<div class="c" style="left:1156px;top:700px"><span class="d">17</span></div>
<div class="rh" style="top:720px">331</div>
<div class="c" style="left:25px;top:720px"><span class="d">100330</span></div>
<div class="c" style="left:137px;top:720px">Liu</div>
<div class="c" style="left:260px;top:720px">David</div>
<div class="c" style="left:368px;top:720px">J.</div>
<div class="c" style="left:467px;top:720px"><span class="d">619</span> Cypress Avenue</div>
<div class="c" style="left:628px;top:720px">Fresno</div>
<div class="c" style="left:732px;top:720px">TX</div>
<div class="c" style="left:843px;top:720px"><span class="d">80272</span></div>
<div class="c" style="left:924px;top:720px">United States</div>
<div class="c" style="left:1050px;top:720px"><span class="d">10</span><span class="s">/</span><span class="d">23</span><span class="s">/</span><span class="d">1966</span></div>
<div class="c" style="left:1156px;top:720px"><span class="d">50</span></div>
<div class="rh" style="top:740px">332</div>
<div class="c" style="left:25px;top:740px"><span class="d">100331</span></div>
<div class="c" style="left:137px;top:740px">Li</div>
<div class="c" style="left:260px;top:740px">Yuhong</div>
<div class="c" style="left:467px;top:740px"><span class="d">78</span> Palmetto Ct</div>
<div class="c" style="left:628px;top:740px">Denver</div>
<div class="c" style="left:732px;top:740px">ME</div>
<div class="c" style="left:843px;top:740px"><span class="d">85712</span></div>
<div class="c" style="left:924px;top:740px">United States</div>
<div class="c" style="left:1050px;top:740px"><span class="d">5</span><span class="s">/</span><span class="d">26</span><span class="s">/</span><span class="d">1987</span></div>
<div class="c" style="left:1156px;top:740px"><span class="d">29</span></div>
<div class="rh" style="top:760px">333</div>
<div class="c" style="left:25px;top:760px"><span class="d">100332</span></div>
<div class="c" style="left:137px;top:760px">Andersen</div>
<div class="c" style="left:260px;top:760px">Thomas</div>
<div class="c" style="left:467px;top:760px"><span class="d">206</span> Sumac Boulevard</div>
<div class="c" style="left:628px;top:760px">Reno</div>
<div class="c" style="left:732px;top:760px">WI</div>
<div class="c" style="left:843px;top:760px"><span class="d">12347</span></div>
<div class="c" style="left:924px;top:760px">United States</div>
<div class="c" style="left:1050px;top:760px"><span class="d">1</span><span class="s">/</span><span class="d">29</span><span class="s">/</span><span class="d">1978</span></div>
<div class="c" style="left:1156px;top:760px"><span class="d">38</span></div>
<div class="rh" style="top:780px">334</div>
<div class="c" style="left:25px;top:780px"><span class="d">100333</span></div>
<div class="c" style="left:137px;top:780px">Litton</div>
<div class="c" style="left:260px;top:780px">Tim</div>
<div class="c" style="left:467px;top:780px"><span class="d">945</span> Redwood Circle</div>
<div class="c" style="left:628px;top:780px">Roanoke</div>
<div class="c" style="left:732px;top:780px">UT</div>
<div class="c" style="left:843px;top:780px"><span class="d">14916</span></div>
<div class="c" style="left:924px;top:780px">United States</div>
<div class="c" style="left:1050px;top:780px"><span class="d">11</span><span class="s">/</span><span class="d">6</span><span class="s">/</span><span class="d">1942</span></div>
<div class="c" style="left:1156px;top:780px"><span class="d">74</span></div>
<div class="a" style="left:1241px;top:20px;width:1px;height:773px;background:#ababab"></div>
<svg class="a" style="left:0;top:0" width="25" height="20"><path d="M22 5 L22 17 L10 17 Z" fill="#b4b4b4"/></svg>
<div class="a" style="left:24px;top:19px;width:115px;height:2px;background:#217346"></div>
<div class="a" style="left:24px;top:19px;width:2px;height:21px;background:#217346"></div>
<div class="a" style="left:137px;top:19px;width:2px;height:19px;background:#217346"></div>
<div class="a" style="left:135px;top:38px;width:5px;height:4px;background:#217346;border:1px solid #fff"></div>
</div>
<div class="a" style="left:1245px;top:196px;width:15px;height:790px;background:#dcdcdc"></div>
<div class="box" style="left:1245px;top:196px;width:15px;height:15px;border-color:#ababab"></div>
<div class="box" style="left:1245px;top:210px;width:15px;height:18px;border-color:#ababab"></div>
<div class="box" style="left:1245px;top:971px;width:15px;height:15px;border-color:#ababab"></div>
<div class="a" style="left:0;top:986px;width:1261px;height:28px;background:#e6e6e6"></div>
<div class="a" style="left:0;top:986px;width:1261px;height:1px;background:#c6c6c6"></div>
<div class="a" style="left:100px;top:986px;width:91px;height:24px;background:#fff;border-bottom:2px solid #217346;border-left:1px solid #c6c6c6;border-right:1px solid #c6c6c6"></div>
<div class="a" style="left:112px;top:991px;font-size:12.5px;font-weight:bold;color:#217346;line-height:18px">Customers</div>
<div class="a" style="left:202px;top:991px;font-size:13px;color:#444;line-height:18px">Products</div>
<div class="a" style="left:279px;top:991px;font-size:13px;color:#444;line-height:18px">Orders</div>
<div class="a" style="left:346px;top:991px;font-size:13px;color:#444;line-height:18px">Customers by Order</div>
<div class="a" style="left:775px;top:993px;width:464px;height:15px;background:#dcdcdc"></div>
<div class="box" style="left:775px;top:993px;width:16px;height:15px;border-color:#ababab"></div>
<div class="box" style="left:790px;top:993px;width:394px;height:15px;border-color:#ababab"></div>
<div class="box" style="left:1224px;top:993px;width:15px;height:15px;border-color:#ababab"></div>
<div class="a" style="left:0;top:1014px;width:1261px;height:19px;background:#f0f0f0;border-top:1px solid #d5d5d5"></div>
<div class="a" style="left:7.5px;top:1018.2px;font-size:10.5px;color:#444;line-height:14px">Ready</div>
<div class="a" style="left:960px;top:1015px;width:38px;height:18px;background:#d4d4d4"></div>
<div class="a" style="left:1217px;top:1018.2px;font-size:10.3px;color:#444;line-height:14px">100%</div>
<svg class="a" style="left:0;top:0;pointer-events:none" width="1261" height="1033"><line x1="85.5" y1="59" x2="85.5" y2="143" stroke="#d8d8d8" stroke-width="1"/><line x1="292.5" y1="59" x2="292.5" y2="143" stroke="#d8d8d8" stroke-width="1"/><line x1="556.5" y1="59" x2="556.5" y2="143" stroke="#d8d8d8" stroke-width="1"/><line x1="697.5" y1="59" x2="697.5" y2="143" stroke="#d8d8d8" stroke-width="1"/><line x1="877.5" y1="59" x2="877.5" y2="143" stroke="#d8d8d8" stroke-width="1"/><line x1="1013.5" y1="59" x2="1013.5" y2="143" stroke="#d8d8d8" stroke-width="1"/><line x1="1200.5" y1="59" x2="1200.5" y2="143" stroke="#d8d8d8" stroke-width="1"/><line x1="172.5" y1="97" x2="172.5" y2="119" stroke="#d8d8d8" stroke-width="1"/><line x1="215.5" y1="97" x2="215.5" y2="119" stroke="#d8d8d8" stroke-width="1"/><line x1="367.5" y1="66" x2="367.5" y2="87" stroke="#d8d8d8" stroke-width="1"/><line x1="367.5" y1="98" x2="367.5" y2="119" stroke="#d8d8d8" stroke-width="1"/><line x1="420.5" y1="65" x2="420.5" y2="119" stroke="#d8d8d8" stroke-width="1"/><line x1="643.5" y1="97" x2="643.5" y2="119" stroke="#d8d8d8" stroke-width="1"/><g stroke="#777" fill="none" stroke-width="1"><path d="M74.5 142.5 V136.5 H80.5"/><path d="M76.5 138.5 L80.5 142.5 M80.5 139.5 V142.5 H77.5"/></g><g stroke="#777" fill="none" stroke-width="1"><path d="M282.5 142.5 V136.5 H288.5"/><path d="M284.5 138.5 L288.5 142.5 M288.5 139.5 V142.5 H285.5"/></g><g stroke="#777" fill="none" stroke-width="1"><path d="M545.5 142.5 V136.5 H551.5"/><path d="M547.5 138.5 L551.5 142.5 M551.5 139.5 V142.5 H548.5"/></g><g stroke="#777" fill="none" stroke-width="1"><path d="M685.5 142.5 V136.5 H691.5"/><path d="M687.5 138.5 L691.5 142.5 M691.5 139.5 V142.5 H688.5"/></g><rect x="13" y="65" width="24.5" height="26.5" fill="#f0c46a"/><path d="M18 66.5 H32 V70 H18 Z" fill="#5f5f5f"/><path d="M22 66.5 V64.5 Q22 63 23.5 63 H26.5 Q28 63 28 64.5 V66.5 Z" fill="#5f5f5f"/><circle cx="25" cy="65.5" r="1" fill="#f0c46a"/><path d="M27.5 74.5 H36 L40.5 79 V92.5 H27.5 Z" fill="#fff" stroke="#555" stroke-width="1"/><path d="M35.5 74.5 V79.5 H40.5" fill="none" stroke="#555" stroke-width="1"/><path d="M22.0 118 L27.0 118 L24.5 120.5 Z" fill="#666"/><path d="M52.8 61.8 L59.6 70.5 M61.4 61.8 L54.6 70.5" stroke="#555" stroke-width="1.9" fill="none"/><circle cx="53" cy="72.7" r="2.5" fill="#e3eef8" stroke="#4f6f94" stroke-width="1.2"/><circle cx="61" cy="72.7" r="2.5" fill="#e3eef8" stroke="#4f6f94" stroke-width="1.2"/><path d="M49.5 85.5 H54 L56 87.5 V95.5 H49.5 Z" fill="#fff" stroke="#505050" stroke-width="1"/><path d="M51 88.5 H54 M51 90.5 H54 M51 92.5 H54" stroke="#505050" stroke-width="0.9"/><path d="M55.5 88.5 H61 L63.5 91 V98.5 H55.5 Z" fill="#fff" stroke="#505050" stroke-width="1"/><path d="M57 92.5 H62 M57 94.5 H62 M57 96.5 H62" stroke="#505050" stroke-width="0.9"/><path d="M71.0 91.5 L76.0 91.5 L73.5 94.0 Z" fill="#666"/><g transform="translate(58.9 113.4) rotate(45)"><rect x="-1.8" y="-7.4" width="3.6" height="4" rx="0.6" fill="#5a5a5a"/><rect x="-4.6" y="-2.4" width="9.2" height="4.8" rx="0.8" fill="#5a5a5a"/><path d="M-4.6 2.6 H4.6 L4.2 8 Q0 9.5 -4.2 8 Z" fill="#e8c47f"/></g><path d="M191.0 76.5 L196.0 76.5 L193.5 79.0 Z" fill="#666"/><path d="M234.0 76.5 L239.0 76.5 L236.5 79.0 Z" fill="#666"/><path d="M251 82.8 L254.95 73.3 L258.9 82.8 M252.5 79.3 H257.4" fill="none" stroke="#444" stroke-width="1.6"/><path d="M257.9 72.9 L260.45 69.7 L263 72.9 Z" fill="#4f5b70"/><path d="M273.5 82.8 L276.55 75.3 L279.6 82.8 M274.7 80 H278.4" fill="none" stroke="#444" stroke-width="1.5"/><path d="M280 70.1 H285 L282.5 72.9 Z" fill="#4f5b70"/><text x="96.5" y="112" font-family="Liberation Sans" font-weight="bold" font-size="12.5" fill="#444">B</text><path d="M121 103.1 H125.8 L125.5 104.4 H124.4 L122.6 110.6 H123.7 L123.4 111.9 H118.6 L118.9 110.6 H120.4 L122.2 104.4 H120.7 Z" fill="#444"/><text x="140" y="111" font-family="Liberation Sans" font-weight="bold" font-size="12" fill="#444">U</text><rect x="140.3" y="113" width="8.4" height="1" fill="#444"/><path d="M159.0 107.5 L164.0 107.5 L161.5 110.0 Z" fill="#666"/><g fill="#777"><rect x="181" y="101" width="1" height="1"/><rect x="181" y="107" width="1" height="1"/><rect x="183" y="101" width="1" height="1"/><rect x="183" y="107" width="1" height="1"/><rect x="185" y="101" width="1" height="1"/><rect x="185" y="107" width="1" height="1"/><rect x="187" y="101" width="1" height="1"/><rect x="187" y="107" width="1" height="1"/><rect x="189" y="101" width="1" height="1"/><rect x="189" y="107" width="1" height="1"/><rect x="191" y="101" width="1" height="1"/><rect x="191" y="107" width="1" height="1"/><rect x="193" y="101" width="1" height="1"/><rect x="193" y="107" width="1" height="1"/><rect x="181" y="101" width="1" height="1"/><rect x="187" y="101" width="1" height="1"/><rect x="193" y="101" width="1" height="1"/><rect x="181" y="103" width="1" height="1"/><rect x="187" y="103" width="1" height="1"/><rect x="193" y="103" width="1" height="1"/><rect x="181" y="105" width="1" height="1"/><rect x="187" y="105" width="1" height="1"/><rect x="193" y="105" width="1" height="1"/><rect x="181" y="107" width="1" height="1"/><rect x="187" y="107" width="1" height="1"/><rect x="193" y="107" width="1" height="1"/><rect x="181" y="109" width="1" height="1"/><rect x="187" y="109" width="1" height="1"/><rect x="193" y="109" width="1" height="1"/><rect x="181" y="111" width="1" height="1"/><rect x="187" y="111" width="1" height="1"/><rect x="193" y="111" width="1" height="1"/></g><rect x="181" y="113" width="13" height="1.2" fill="#444"/><path d="M201.5 107.5 L206.5 107.5 L204 110.0 Z" fill="#666"/><path d="M225.5 107.2 L230.8 102.2 L236.5 107.5 L231 112 Z" fill="#fff" stroke="#555" stroke-width="1.1"/><path d="M228.3 104.5 V100.3 H230 V103" fill="none" stroke="#555" stroke-width="1"/><path d="M235.3 105 Q239.8 106.5 239.5 109.5 Q238 111 236.5 109.5 Z" fill="#3f74b1"/><rect x="223" y="112.2" width="16.5" height="4.2" fill="#f5f000"/><path d="M245.0 107.5 L250.0 107.5 L247.5 110.0 Z" fill="#666"/><path d="M261.2 111.8 L265.45 102.3 L269.7 111.8 M262.9 108.3 H268" fill="none" stroke="#444" stroke-width="1.9"/><rect x="257" y="112" width="16" height="3.8" fill="#e01010"/><path d="M279.0 107.5 L284.0 107.5 L281.5 110.0 Z" fill="#666"/><rect x="301" y="69" width="14" height="1" fill="#555"/><rect x="301" y="72" width="14" height="1" fill="#555"/><rect x="301" y="75" width="14" height="1" fill="#555"/><rect x="323" y="73" width="14" height="1" fill="#555"/><rect x="323" y="76" width="14" height="1" fill="#555"/><rect x="323" y="79" width="14" height="1" fill="#555"/><rect x="345" y="78" width="14" height="1" fill="#555"/><rect x="345" y="81" width="14" height="1" fill="#555"/><rect x="345" y="84" width="14" height="1" fill="#555"/><text x="0" y="0" font-family="Liberation Sans" font-size="11" fill="#444" transform="translate(379 81) rotate(-48)">ab</text><path d="M381.5 83.5 L390 74.5 M386 74 H390.5 V78.5" stroke="#444" stroke-width="1.1" fill="none"/><path d="M395.0 76.5 L400.0 76.5 L397.5 79.0 Z" fill="#666"/><rect x="301" y="103" width="14" height="1" fill="#555"/><rect x="301" y="109" width="14" height="1" fill="#555"/><rect x="301" y="106" width="10" height="1" fill="#555"/><rect x="301" y="112" width="10" height="1" fill="#555"/><rect x="323" y="103" width="14" height="1" fill="#555"/><rect x="323" y="109" width="14" height="1" fill="#555"/><rect x="325" y="106" width="10" height="1" fill="#555"/><rect x="325" y="112" width="10" height="1" fill="#555"/><rect x="345" y="103" width="14" height="1" fill="#555"/><rect x="345" y="109" width="14" height="1" fill="#555"/><rect x="349" y="106" width="10" height="1" fill="#555"/><rect x="349" y="112" width="10" height="1" fill="#555"/><rect x="375" y="101" width="16" height="1" fill="#555"/><rect x="375" y="113" width="16" height="1" fill="#555"/><rect x="383" y="104" width="8" height="1" fill="#555"/><rect x="383" y="107" width="8" height="1" fill="#555"/><rect x="383" y="110" width="8" height="1" fill="#555"/><path d="M381.5 107.5 H376 M378.5 105 L376 107.5 L378.5 110" stroke="#4a7eb5" stroke-width="1.6" fill="none"/><rect x="397" y="101" width="16" height="1" fill="#555"/><rect x="397" y="113" width="16" height="1" fill="#555"/><rect x="405" y="104" width="8" height="1" fill="#555"/><rect x="405" y="107" width="8" height="1" fill="#555"/><rect x="405" y="110" width="8" height="1" fill="#555"/><path d="M397.5 107.5 H403 M400.5 105 L403 107.5 L400.5 110" stroke="#4a7eb5" stroke-width="1.6" fill="none"/><g stroke="#555" fill="none" stroke-width="1"><rect x="428.5" y="69.5" width="9" height="3.5"/><path d="M437.5 71.5 H441"/><rect x="428.5" y="76.5" width="9" height="7"/><path d="M428.5 79.5 H437.5"/></g><path d="M441 71.5 Q444 71.5 444 75 Q444 78.5 439 78.5 M440.8 76.7 L438.8 78.5 L440.8 80.3" stroke="#3f74b1" stroke-width="1.2" fill="none"/><g stroke="#555" fill="none" stroke-width="1"><rect x="428.5" y="100.5" width="14" height="14"/><path d="M428.5 104.5 H442.5 M428.5 110.5 H442.5 M435.5 100.5 V104.5 M435.5 110.5 V114.5"/></g><path d="M430.5 107.5 H440.5 M432 106 L430.5 107.5 L432 109 M439 106 L440.5 107.5 L439 109" stroke="#555" stroke-width="1" fill="none"/><path d="M542.5 107 L547.5 107 L545 109.5 Z" fill="#666"/><path d="M681.5 76.5 L686.5 76.5 L684 79.0 Z" fill="#666"/><path d="M586.0 106.5 L591.0 106.5 L588.5 109.0 Z" fill="#666"/><text x="657.5" y="106.8" font-family="Liberation Sans" font-size="9" fill="#444">.0</text><text x="653.5" y="114" font-family="Liberation Sans" font-size="9" fill="#444">.00</text><path d="M651.5 104.5 H657.5 M653.5 102.5 L651.5 104.5 L653.5 106.5" stroke="#4a7eb5" stroke-width="1.3" fill="none"/><text x="675" y="106.8" font-family="Liberation Sans" font-size="9" fill="#444">.00</text><text x="680" y="114" font-family="Liberation Sans" font-size="9" fill="#444">.0</text><path d="M673.5 111 H679.5 M677.5 109 L679.5 111 L677.5 113" stroke="#4a7eb5" stroke-width="1.3" fill="none"/><rect x="723.5" y="63.5" width="27" height="24" fill="#fff"/><g stroke="#8a8a8a" fill="none" stroke-width="1"><rect x="723.5" y="63.5" width="27" height="24"/><path d="M730.5 63.5 V87.5 M737.5 63.5 V87.5 M743.5 63.5 V87.5 M723.5 69.5 H750.5 M723.5 75.5 H750.5 M723.5 81.5 H750.5"/></g><rect x="731" y="64" width="6" height="5.5" fill="#d05b3a"/><rect x="731" y="70" width="11" height="5" fill="#3f74b1"/><rect x="731" y="75.8" width="8.7" height="5.2" fill="#d05b3a"/><rect x="731" y="81.5" width="6" height="6" fill="#3f74b1"/><rect x="737.5" y="80.5" width="15" height="11.5" fill="#fff" stroke="#555"/><path d="M741.5 84.5 H748.5 M741.5 87.5 H748.5 M747 82.5 L743 89.5" stroke="#333" stroke-width="1.1"/><path d="M765.3 119 L769.7 119 L767.5 121.2 Z" fill="#666"/><rect x="788.5" y="65.5" width="24" height="20" fill="#fff"/><rect x="794.5" y="70" width="18" height="15.5" fill="#c5d5e8"/><g stroke="#8a8a8a" fill="none" stroke-width="1"><rect x="788.5" y="65.5" width="24" height="20"/><path d="M794.5 65.5 V85.5 M800.5 65.5 V85.5 M806.5 65.5 V85.5 M788.5 70.5 H812.5 M788.5 75.5 H812.5 M788.5 80.5 H812.5"/></g><path d="M817 70.5 L806 83.5" stroke="#f3f3f3" stroke-width="6"/><path d="M816.5 71 L806.5 83" stroke="#777" stroke-width="3.6"/><path d="M805.5 83 Q809.5 85.5 807.5 88.5 Q803 92.5 795 92.5 Q798 86.5 801 84.5 Q803.5 82.5 805.5 83 Z" fill="#3f74b1"/><path d="M803.5 85.5 Q805.5 86.5 804.5 88" stroke="#fff" stroke-width="1" fill="none"/><path d="M814.3 119 L818.7 119 L816.5 121.2 Z" fill="#666"/><rect x="838.5" y="63.5" width="25" height="21" fill="#fff"/><rect x="844" y="68" width="13.5" height="11.5" fill="#c5d5e8"/><g stroke="#8a8a8a" fill="none" stroke-width="1"><rect x="838.5" y="63.5" width="25" height="21"/><path d="M843.5 63.5 V84.5 M857.5 63.5 V84.5 M838.5 67.5 H863.5 M838.5 79.5 H863.5"/></g><path d="M867 69 L856.5 82" stroke="#f3f3f3" stroke-width="6"/><path d="M866.5 69.5 L857 81.5" stroke="#777" stroke-width="3.6"/><path d="M856 81.5 Q860 84 858 87 Q853.5 91 845.5 90.5 Q848.5 85 851.5 83 Q854 81 856 81.5 Z" fill="#3f74b1"/><path d="M854 84 Q856 85 855 86.5" stroke="#fff" stroke-width="1" fill="none"/><path d="M865.3 119 L869.7 119 L867.5 121.2 Z" fill="#666"/><g stroke="#666" fill="none" stroke-width="1"><rect x="890.5" y="63.5" width="14" height="5"/><path d="M897.5 63.5 V68.5"/><rect x="890.5" y="79.5" width="14" height="10"/><path d="M890.5 84.5 H904.5 M897.5 79.5 V89.5"/></g><rect x="901.5" y="71.5" width="14" height="5" fill="#c5cfdb" stroke="#8a9bb0"/><path d="M908.5 71.5 V76.5" stroke="#8a9bb0"/><path d="M891.5 74.2 H897.8 M894.2 71.5 L891.5 74.2 L894.2 76.9" stroke="#3f74b1" stroke-width="1.7" fill="none"/><path d="M900.0 118.5 L905.0 118.5 L902.5 121.0 Z" fill="#666"/><g stroke="#666" fill="none" stroke-width="1"><rect x="931.5" y="63.5" width="14" height="5"/><path d="M938.5 63.5 V68.5"/><rect x="931.5" y="80.5" width="14" height="10"/><path d="M931.5 85.5 H945.5 M938.5 80.5 V90.5"/></g><rect x="937.5" y="71.5" width="8" height="5" fill="#c5cfdb" stroke="#8a9bb0"/><path d="M946.5 69.5 L959 81 M959 69 L946.5 81" stroke="#c9573a" stroke-width="1.8"/><path d="M942.0 118.5 L947.0 118.5 L944.5 121.0 Z" fill="#666"/><path d="M974.5 64.3 H994.8 M977 62 L974.5 64.3 L977 66.6 M992.3 62 L994.8 64.3 L992.3 66.6" stroke="#3f74b1" stroke-width="1.1" fill="none"/><path d="M973.5 61.5 V67 M995.5 61.5 V67" stroke="#3f74b1" stroke-width="1"/><path d="M973.5 68.5 H1000.5 V88.5 H988 Q986 92 983 92 H975 Q973.5 92 973.5 90 Z" fill="#fff" stroke="#777" stroke-width="1"/><g stroke="#999" fill="none" stroke-width="1"><path d="M980.5 68.5 V92 M988.5 68.5 V88.5 M995.5 68.5 V88.5 M973.5 73.5 H1000.5 M973.5 83.5 H1000.5 M973.5 88.5 H988"/></g><rect x="981" y="74" width="7" height="9" fill="#3f74b1"/><path d="M985.0 118.5 L990.0 118.5 L987.5 121.0 Z" fill="#666"/><path d="M1021.5 61.5 H1036 V63.8 H1025.3 L1030.8 68.4 L1025.3 73.2 H1036.2 V75.6 H1021.5 V73.8 L1027.6 68.4 L1021.5 63.2 Z" fill="#3c3c3c"/><path d="M1099.8000000000002 68.2 L1105.0 68.2 L1102.4 70.8 Z" fill="#666"/><rect x="1022.5" y="84.5" width="13" height="14.5" fill="#fff" stroke="#666"/><rect x="1022.5" y="84.5" width="13" height="2.8" fill="#777"/><path d="M1029 88.5 V96.5 M1025.3 92.5 L1029 96.5 L1032.7 92.5" stroke="#3f74b1" stroke-width="1.8" fill="none"/><path d="M1058.1999999999998 91.2 L1063.0 91.2 L1060.6 93.60000000000001 Z" fill="#666"/><path d="M1023.5 115.5 L1031.5 107.5 Q1032.5 106.8 1033.5 107.5 L1036 110 Q1036.7 111 1036 112 L1028.5 119.5 H1026.5 Z" fill="#e0879a"/><path d="M1026.5 120.5 H1036" stroke="#555" stroke-width="1"/><path d="M1070.3999999999999 114 L1075.2 114 L1072.8 116.4 Z" fill="#666"/><path d="M1116 75.5 L1120.6 64 H1122.4 L1127 75.5 H1125 L1123.8 72.5 H1119.2 L1118 75.5 Z M1119.8 70.8 H1123.2 L1121.5 66.3 Z" fill="#3d6fa5"/><path d="M1117 78.3 H1126.5 V80 L1119.5 88.2 H1126.8 V89.8 H1116.8 V88.1 L1123.8 79.9 H1117 Z" fill="#7b5aa6"/><path d="M1128.2 70.9 H1145 L1138.2 78.5 V85.5 H1135 V78.5 Z" fill="#777"/><path d="M1136 79 V84.5 H1137.2 V79 Z" fill="#fff"/><path d="M1142.3 120.5 L1146.7 120.5 L1144.5 122.7 Z" fill="#666"/><path d="M1134.5 118.5 L1134.5 118.5 L1134.5 118.5 Z" fill="#f3f3f3"/><circle cx="1177.1" cy="72.6" r="8.6" fill="none" stroke="#3d6fa5" stroke-width="1.8"/><path d="M1170.5 79.2 L1162.5 87.2" stroke="#3d6fa5" stroke-width="3.4" stroke-linecap="round"/><path d="M1188.3 120.5 L1192.7 120.5 L1190.5 122.7 Z" fill="#666"/><path d="M1244 141 L1248.5 136.5 L1253 141" stroke="#555" stroke-width="1.5" fill="none"/><path fill-rule="evenodd" fill="#fff" d="M20 6 H34 V20 H20 Z M22 7.3 H32 V11 Q32 12.7 30.3 12.7 H23.7 Q22 12.7 22 11 Z M23 15.1 H31 V19 H26.9 V17 H24.9 V19 H23 Z"/><path d="M64.5 10 H72.4 A4.15 4.15 0 0 1 72.4 18.3 H71" fill="none" stroke="#fff" stroke-width="2"/><path d="M69.3 6.3 L64 10 L69.3 13.7" fill="none" stroke="#fff" stroke-width="2"/><path d="M85.9 11.1 H91.1 L88.5 13.9 Z" fill="#fff"/><g transform="translate(184.1 0) scale(-1 1)"><path d="M64.5 10 H72.4 A4.15 4.15 0 0 1 72.4 18.3 H71" fill="none" stroke="#52946c" stroke-width="2"/><path d="M69.3 6.3 L64 10 L69.3 13.7" fill="none" stroke="#52946c" stroke-width="2"/></g><path d="M129.5 11.1 H134.7 L132.1 13.9 Z" fill="#52946c"/><rect x="158" y="9.5" width="6" height="1.3" fill="#fff"/><rect x="158" y="12" width="6" height="1.3" fill="#fff"/><path d="M157.8 14 H164.2 L161 17 Z" fill="#fff"/><rect x="1095.5" y="8.5" width="12" height="9.5" fill="none" stroke="#fff" stroke-width="1.2"/><path d="M1095.5 10.5 H1107.5" stroke="#fff" stroke-width="1.2"/><path d="M1101.5 17 V12.5 M1099 15 L1101.5 12.5 L1104 15" stroke="#fff" stroke-width="1.2" fill="none"/><rect x="1143" y="13.5" width="9" height="2" fill="#fff"/><rect x="1189.5" y="8.5" width="9.5" height="9.5" fill="none" stroke="#fff" stroke-width="1.2"/><rect x="1189" y="8" width="10.5" height="2.5" fill="#fff"/><path d="M1235.5 8.5 L1244.5 17.5 M1244.5 8.5 L1235.5 17.5" stroke="#fff" stroke-width="1.8"/><circle cx="1203.5" cy="40" r="3.8" fill="none" stroke="#fff" stroke-width="1.3"/><path d="M1196.5 50.5 Q1197 44.5 1203.5 44.5 Q1206 44.5 1207.5 45.5" fill="none" stroke="#fff" stroke-width="1.3"/><path d="M1206 47.5 H1212 M1209 44.5 V50.5" stroke="#fff" stroke-width="1.3"/><path d="M543.5 46 Q540.5 43.5 540.5 40.5 Q540.5 35.5 546.5 35.5 Q552.5 35.5 552.5 40.5 Q552.5 43.5 549.5 46 V48.5 H543.5 Z" fill="none" stroke="#c8dccf" stroke-width="1.1"/><path d="M544 50.5 H549" stroke="#c8dccf" stroke-width="1.1"/><path d="M93 168 H100 L96.5 172 Z" fill="#666"/><g fill="#999"><rect x="121.5" y="165.5" width="1.5" height="1.5"/><rect x="121.5" y="169.5" width="1.5" height="1.5"/><rect x="121.5" y="173.5" width="1.5" height="1.5"/></g><path d="M151.5 166.5 L160.5 175.5 M160.5 166.5 L151.5 175.5" stroke="#b0b0b0" stroke-width="1.3"/><path d="M186.5 171.5 L190.5 175.5 L198.5 166.5" stroke="#b0b0b0" stroke-width="1.5" fill="none"/><text x="222.5" y="176" font-family="Liberation Serif" font-style="italic" font-weight="bold" font-size="14" fill="#555">f</text><text x="228" y="176.5" font-family="Liberation Serif" font-style="italic" font-size="10.5" fill="#555">x</text><path d="M1246.5 169 L1249.5 172 L1252.5 169" stroke="#666" stroke-width="1.6" fill="none"/><path d="M1249 206 H1256 L1252.5 202 Z" fill="#777"/><path d="M1249 976 H1256 L1252.5 980 Z" fill="#777"/><path d="M785 997 V1004 L781 1000.5 Z" fill="#777"/><path d="M1229 997 V1004 L1233 1000.5 Z" fill="#777"/><g fill="#aaa"><rect x="758.5" y="995.5" width="1.5" height="1.5"/><rect x="758.5" y="999.5" width="1.5" height="1.5"/><rect x="758.5" y="1003.5" width="1.5" height="1.5"/></g><path d="M31 996 V1004 L27.5 1000 Z" fill="#c6c6c6"/><path d="M57 996 V1004 L60.5 1000 Z" fill="#c6c6c6"/><path d="M267.5 992 V1008" stroke="#c6c6c6"/><path d="M332.5 992 V1008" stroke="#c6c6c6"/><path d="M478.5 992 V1008" stroke="#c6c6c6"/><circle cx="519.5" cy="1000.5" r="7" fill="none" stroke="#777" stroke-width="1.2"/><path d="M515.5 1000.5 H523.5 M519.5 996.5 V1004.5" stroke="#777" stroke-width="1.4"/><g stroke="#666" fill="none" stroke-width="1"><rect x="972.5" y="1018.5" width="12" height="11"/><path d="M976.5 1018.5 V1029.5 M980.5 1018.5 V1029.5 M972.5 1022.5 H984.5 M972.5 1026.5 H984.5"/></g><g stroke="#666" fill="none" stroke-width="1"><rect x="1010.5" y="1018.5" width="13" height="11"/><rect x="1013.5" y="1020.5" width="7" height="7"/><path d="M1015 1022.5 H1019 M1015 1024.5 H1019"/></g><g stroke="#666" fill="none" stroke-width="1"><rect x="1048.5" y="1018.5" width="13" height="11"/><path d="M1048.5 1024.5 H1055.5 V1018.5 M1052.5 1018.5 V1024.5"/></g><rect x="1079" y="1024" width="6" height="1.6" fill="#555"/><rect x="1089" y="1024" width="100" height="1" fill="#999"/><rect x="1137" y="1019" width="4" height="11" fill="#666"/><path d="M1193 1025 H1201 M1197 1021 V1029" stroke="#555" stroke-width="1.6"/></svg>
</body></html>
